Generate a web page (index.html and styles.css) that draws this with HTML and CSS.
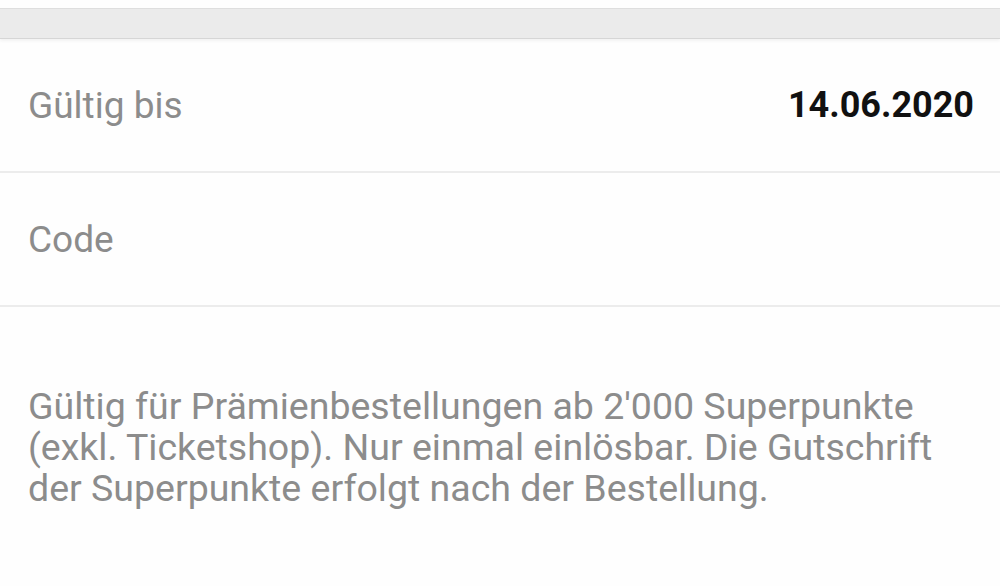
FILE: index.html
```html
<!DOCTYPE html>
<html lang="de">
<head>
<meta charset="utf-8">
<link rel="stylesheet" href="styles.css">
</head>
<body>
<div class="topbar"></div>
<div class="row">
  <span class="label">Gültig bis</span>
  <span class="value">14.06.2020</span>
</div>
<div class="row">
  <span class="label">Code</span>
  <span class="value"></span>
</div>
<p class="note">Gültig für Prämienbestellungen ab 2'000 Superpunkte (exkl. Ticketshop). Nur einmal einlösbar. Die Gutschrift der Superpunkte erfolgt nach der Bestellung.</p>
</body>
</html>
```
FILE: styles.css
```css
html, body {
  margin: 0;
  padding: 0;
  background: #fefefe;
  font-family: Roboto, "Liberation Sans", sans-serif;
}
body {
  padding-top: 8px;
}
.topbar {
  height: 29px;
  background: #ebebeb;
  border-top: 1px solid #dedede;
  border-bottom: 1px solid #d6d6d6;
  box-shadow: 0 2px 3px rgba(0,0,0,0.05);
}
.row {
  height: 134px;
  display: flex;
  align-items: center;
  justify-content: space-between;
  padding: 0 26px 0 28px;
  border-bottom: 2px solid #ececec;
  box-sizing: border-box;
}
.row:first-of-type {
  height: 135px;
}
.label {
  font-size: 37px;
  color: #8c8c8c;
}
.value {
  font-size: 36px;
  font-weight: 700;
  color: #111;
}
.note {
  margin: 79px 0 0 0;
  padding: 0 40px 0 28px;
  font-size: 37.5px;
  line-height: 41px;
  color: #8c8c8c;
}
```
